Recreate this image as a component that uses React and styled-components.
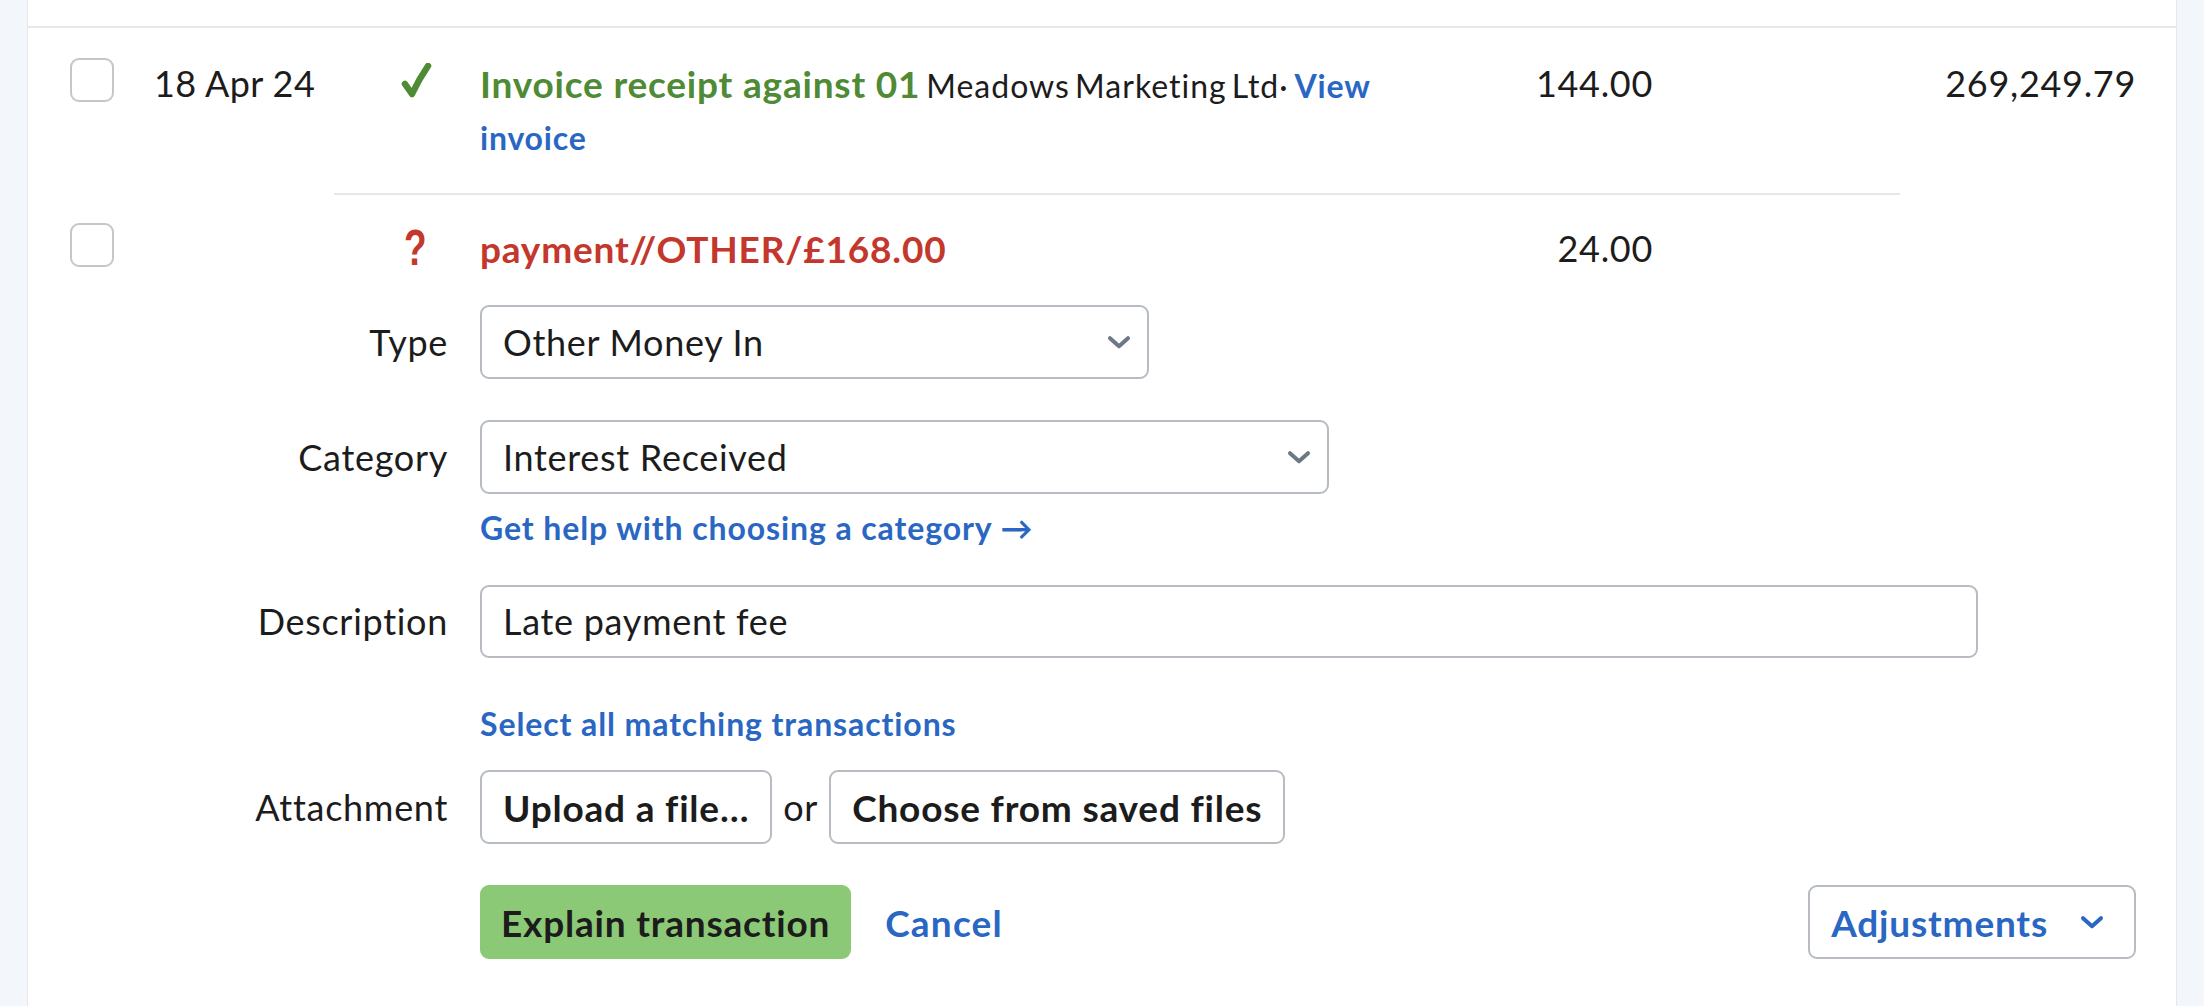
import React from 'react';
import styled, {createGlobalStyle} from 'styled-components';

const GlobalStyle = createGlobalStyle`
  html, body {
    margin: 0;
    padding: 0;
    background: #f3f6fb;
  }
  body {
    font-family: Lato, "Noto Sans", Arial, sans-serif;
    color: #1c1c1c;
  }
`;

// colours used across the page
const BLUE = '#2a67c3';
const GREEN = '#4f8a35';
const RED = '#c4372c';
const BORDER = '#b7bcc2';

const Page = styled.div`
  min-height: 1006px;
  padding: 0 27px;
  box-sizing: border-box;
`;

const Panel = styled.div`
  background: #fff;
  min-height: 1006px;
  border-left: 1px solid #e4e8ef;
  border-right: 1px solid #e4e8ef;
  font-size: 36px;
  line-height: 51px;
  letter-spacing: 0.7px;
`;

const PrevRow = styled.div`
  height: 26px;
  border-bottom: 2px solid #e6e7eb;
`;

const TxRow = styled.div`
  display: grid;
  grid-template-columns: 84px 245px 81px 1fr 234px 483px;
  align-items: start;
  padding: ${p => p.$top}px 40px ${p => p.$bottom}px 42px;
`;

const Check = styled.span`
  display: block;
  width: 44px;
  height: 44px;
  box-sizing: border-box;
  border: 2px solid #c3c7cc;
  border-radius: 9px;
  background: #fff;
`;

const DateCell = styled.div`
  white-space: nowrap;
  letter-spacing: 0.4px;
`;

const IconCell = styled.div`
  width: 34px;
  display: flex;
  justify-content: center;
  padding-top: ${p => p.$pt || 0}px;
`;

const Question = styled.span`
  color: ${RED};
  font-family: "Liberation Sans", Arial, sans-serif;
  font-weight: 700;
  font-size: 50px;
  line-height: 51px;
  transform: scaleX(0.74);
`;

const Desc = styled.div`
  padding-right: 20px;
  word-spacing: -4px;
`;

const Strong = styled.span`
  font-weight: 700;
  font-size: 37px;
  letter-spacing: 0.8px;
  word-spacing: 0;
  color: ${p => p.$color};
`;

const Party = styled.span`
  font-size: 32px;
  letter-spacing: 1px;
`;

const Link = styled.a`
  color: ${BLUE};
  font-weight: 700;
  text-decoration: none;
  font-size: ${p => p.$size || 32}px;
  letter-spacing: ${p => p.$ls || 0.8}px;
`;

const Amount = styled.div`
  text-align: right;
`;

const Divider = styled.div`
  margin: 0 276px 0 306px;
  border-top: 2px solid #e6e7eb;
`;

const Form = styled.div`
  display: flex;
  flex-direction: column;
  padding: 0 40px 0 42px;
`;

const FormRow = styled.div`
  display: grid;
  grid-template-columns: 378px 1fr;
  column-gap: 32px;
  align-items: center;
  margin-top: ${p => p.$mt}px;
`;

const Label = styled.div`
  text-align: right;
  white-space: nowrap;
`;

const Field = styled.div`
  display: flex;
  align-items: center;
`;

const Select = styled.div`
  width: ${p => p.$w}px;
  height: 74px;
  box-sizing: border-box;
  border: 2px solid ${BORDER};
  border-radius: 9px;
  display: flex;
  align-items: center;
  justify-content: space-between;
  padding: 0 16px 0 21px;
`;

const Input = styled.div`
  width: 1498px;
  height: 73px;
  box-sizing: border-box;
  border: 2px solid ${BORDER};
  border-radius: 9px;
  display: flex;
  align-items: center;
  padding: 0 21px;
`;

const HelpLink = styled.div`
  line-height: 40px;
`;

const Button = styled.button`
  height: 74px;
  box-sizing: border-box;
  font-family: inherit;
  font-size: 37px;
  font-weight: 700;
  letter-spacing: 0.8px;
  color: #1c1c1c;
  background: #fff;
  border: 2px solid ${BORDER};
  border-radius: 9px;
  padding: 0 21px;
  display: flex;
  align-items: center;
  gap: 32px;
  cursor: pointer;
`;

const PrimaryButton = styled(Button)`
  background: #8cc976;
  border-color: #8cc976;
  padding: 0 19px;
`;

const LinkButton = styled.button`
  font-family: inherit;
  font-size: 37px;
  font-weight: 700;
  letter-spacing: 1.2px;
  color: ${BLUE};
  background: none;
  border: 0;
  padding: 0;
  margin-left: 34px;
  cursor: pointer;
`;

const MenuButton = styled(Button)`
  color: ${BLUE};
  margin-left: auto;
  padding: 0 30px 0 21px;
`;

const Or = styled.span`
  margin: 0 11px;
`;

const Chevron = ({color = '#6d7884', size = 24}) => (
  <svg width={size} height={size * 0.6} viewBox='0 0 24 14' fill='none'>
    <path d='M3 3 L12 11 L21 3' stroke={color} strokeWidth='4' strokeLinecap='round' strokeLinejoin='round' />
  </svg>
);

const Tick = () => (
  <svg width='32' height='38' viewBox='0 0 32 38'>
    <path d='M5 21 L12 31 Q19 16 28 3' stroke={GREEN} strokeWidth='6.5' fill='none' strokeLinecap='round' strokeLinejoin='round' />
  </svg>
);

const App = () => {
  return (
    <>
      <GlobalStyle />
      <Page>
        <Panel>
          <PrevRow />
          <TxRow $top={30} $bottom={30}>
            <Check />
            <DateCell>18 Apr 24</DateCell>
            <IconCell $pt={5}>
              <Tick />
            </IconCell>
            <Desc>
              <Strong $color={GREEN}>Invoice receipt against 01</Strong>{' '}
              <Party>Meadows Marketing Ltd·</Party> <Link href='#'>View invoice</Link>
            </Desc>
            <Amount>144.00</Amount>
            <Amount>269,249.79</Amount>
          </TxRow>
          <Divider />
          <TxRow $top={28} $bottom={0}>
            <Check />
            <div />
            <IconCell>
              <Question>?</Question>
            </IconCell>
            <Desc>
              <Strong $color={RED}>payment//OTHER/£168.00</Strong>
            </Desc>
            <Amount>24.00</Amount>
            <div />
          </TxRow>
          <Form>
            <FormRow $mt={30}>
              <Label>Type</Label>
              <Field>
                <Select $w={669}>
                  Other Money In
                  <Chevron />
                </Select>
              </Field>
            </FormRow>
            <FormRow $mt={41}>
              <Label>Category</Label>
              <Field>
                <Select $w={849}>
                  Interest Received
                  <Chevron />
                </Select>
              </Field>
            </FormRow>
            <FormRow $mt={12}>
              <div />
              <HelpLink>
                <Link href='#' $size={32} $ls={0.9}>Get help with choosing a category →</Link>
              </HelpLink>
            </FormRow>
            <FormRow $mt={37}>
              <Label>Description</Label>
              <Field>
                <Input>Late payment fee</Input>
              </Field>
            </FormRow>
            <FormRow $mt={44}>
              <div />
              <HelpLink>
                <Link href='#' $size={32} $ls={0.9}>Select all matching transactions</Link>
              </HelpLink>
            </FormRow>
            <FormRow $mt={26}>
              <Label>Attachment</Label>
              <Field>
                <Button>Upload a file…</Button>
                <Or>or</Or>
                <Button>Choose from saved files</Button>
              </Field>
            </FormRow>
            <FormRow $mt={41}>
              <div />
              <Field>
                <PrimaryButton>Explain transaction</PrimaryButton>
                <LinkButton>Cancel</LinkButton>
                <MenuButton>
                  Adjustments
                  <Chevron color={BLUE} />
                </MenuButton>
              </Field>
            </FormRow>
          </Form>
        </Panel>
      </Page>
    </>
  );
};

export default App;
